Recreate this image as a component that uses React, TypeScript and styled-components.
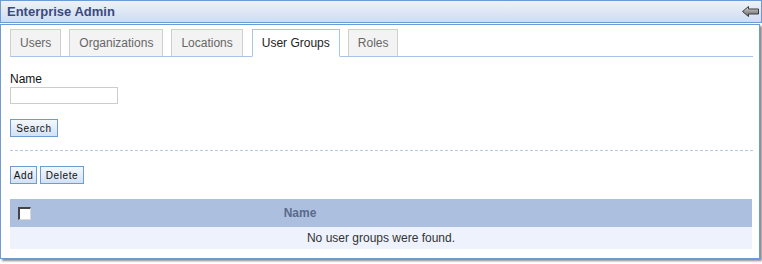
import styled, { createGlobalStyle } from 'styled-components';

const GlobalStyle = createGlobalStyle`
  html, body {
    margin: 0;
    padding: 0;
    background: #fff;
  }
  body {
    font-family: "Liberation Sans", Arial, sans-serif;
    font-size: 12px;
    color: #333;
  }
`;

const Page = styled.div`
  width: 762px;
  height: 264px;
  display: flex;
  flex-direction: column;
  gap: 1px;
`;

const Header = styled.div`
  height: 21px;
  border: 1px solid #6d9bd3;
  background: linear-gradient(#edf2fa, #cfdcf1);
  display: flex;
  align-items: center;
  justify-content: space-between;
  padding: 0 2px 0 6px;
`;

const Title = styled.div`
  font-size: 13px;
  font-weight: bold;
  color: #3b4a7e;
`;

const Panel = styled.div`
  box-sizing: border-box;
  width: 760px;
  height: 235px;
  border: 1px solid #6d9bd3;
  box-shadow: 2px 2px 2px #8a8a8a;
  padding: 4px 6px 0 9px;
  background: #fff;
  display: flex;
  flex-direction: column;
`;

const TabBar = styled.div`
  display: flex;
  align-items: flex-end;
  gap: 8px;
  border-bottom: 1px solid #a9c4e8;
  height: 27px;
`;

const Tab = styled.div<{ active?: boolean }>`
  height: 26px;
  display: flex;
  align-items: center;
  padding: 0 9px;
  border: 1px solid ${({ active }) => (active ? '#a9c4e8' : '#cfcfcf')};
  border-bottom: ${({ active }) => (active ? '1px solid #fff' : 'none')};
  margin-bottom: ${({ active }) => (active ? '-1px' : '0')};
  margin-left: ${({ active }) => (active ? '1px' : '0')};
  background: ${({ active }) => (active ? '#fff' : '#f3f3f3')};
  color: ${({ active }) => (active ? '#222' : '#666')};
  font-size: 12px;
`;

const Form = styled.div`
  display: flex;
  flex-direction: column;
  align-items: flex-start;
  padding-top: 15px;
`;

const Label = styled.div`
  font-size: 12px;
  color: #111;
  line-height: 14px;
`;

const TextInput = styled.div`
  width: 106px;
  height: 15px;
  border: 1px solid #cccccc;
  margin-top: 1px;
  background: #fff;
`;

const Button = styled.div<{ w: number }>`
  width: ${({ w }) => w - 2}px;
  height: 16px;
  border: 1px solid #6d9bd3;
  background: linear-gradient(#f4f8fd, #d3e1f4);
  font-size: 10px;
  letter-spacing: 0.6px;
  color: #111;
  display: flex;
  align-items: center;
  justify-content: center;
`;

const SearchRow = styled.div`
  margin-top: 15px;
`;

const Divider = styled.div`
  margin-top: 13px;
  border-top: 1px dashed #b4c9e6;
`;

const ButtonRow = styled.div`
  display: flex;
  gap: 3px;
  margin-top: 15px;
`;

const Table = styled.div`
  margin-top: 15px;
  width: 742px;
`;

const HeadRow = styled.div`
  height: 28px;
  background: #adbfdf;
  display: grid;
  grid-template-columns: 24px 532px 1fr;
  align-items: center;
`;

const HeadCell = styled.div`
  font-weight: bold;
  color: #5a6a8c;
  text-align: center;
  font-size: 12px;
`;

const CheckBox = styled.div`
  width: 10px;
  height: 10px;
  margin-left: 8px;
  background: #fff;
  border-style: solid;
  border-width: 2px 1px 1px 2px;
  border-color: #444 #d8d8d8 #d8d8d8 #444;
`;

const EmptyRow = styled.div`
  height: 22px;
  background: #eef2fd;
  display: flex;
  align-items: center;
  justify-content: center;
  color: #333;
  font-size: 12px;
`;

const BackIcon = () => (
  <svg width="17" height="11" viewBox="0 0 17 11">
    <defs>
      <linearGradient id="ag" x1="0" y1="0" x2="0" y2="1">
        <stop offset="0" stopColor="#e6e6e6" />
        <stop offset="0.5" stopColor="#9a9a9a" />
        <stop offset="1" stopColor="#6a6a6a" />
      </linearGradient>
    </defs>
    <polygon
      points="0.5,5.5 6.5,0.5 6.5,3 16.5,3 16.5,8 6.5,8 6.5,10.5"
      fill="url(#ag)"
      stroke="#3c3c3c"
      strokeWidth="1"
    />
  </svg>
);

const tabs = ['Users', 'Organizations', 'Locations', 'User Groups', 'Roles'];

export default function App() {
  return (
    <>
      <GlobalStyle />
      <Page>
        <Header>
          <Title>Enterprise Admin</Title>
          <BackIcon />
        </Header>
        <Panel>
          <TabBar>
            {tabs.map(t => (
              <Tab key={t} active={t === 'User Groups'}>
                {t}
              </Tab>
            ))}
          </TabBar>
          <Form>
            <Label>Name</Label>
            <TextInput />
            <SearchRow>
              <Button w={48}>Search</Button>
            </SearchRow>
          </Form>
          <Divider />
          <ButtonRow>
            <Button w={27}>Add</Button>
            <Button w={44}>Delete</Button>
          </ButtonRow>
          <Table>
            <HeadRow>
              <CheckBox />
              <HeadCell>Name</HeadCell>
              <div />
            </HeadRow>
            <EmptyRow>No user groups were found.</EmptyRow>
          </Table>
        </Panel>
      </Page>
    </>
  );
}
